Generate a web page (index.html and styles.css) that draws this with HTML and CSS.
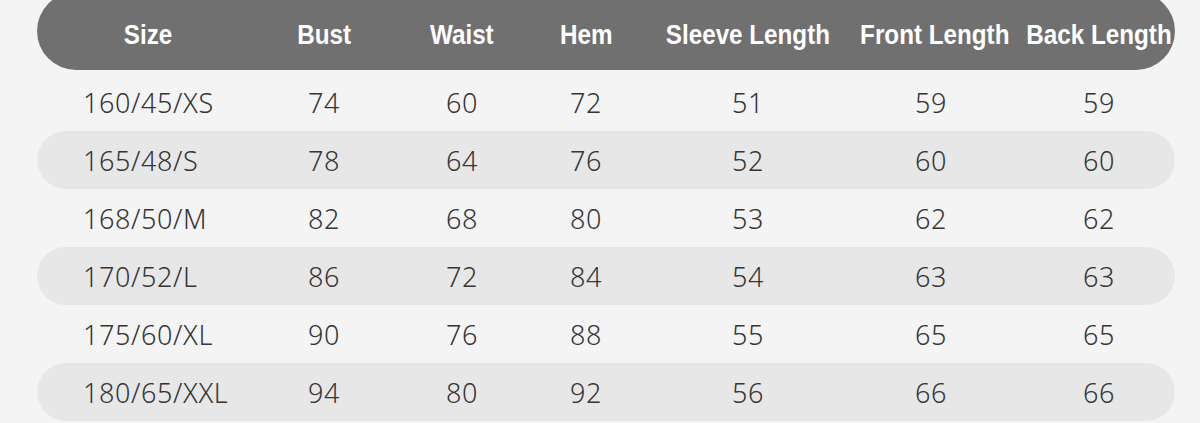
FILE: index.html
```html
<!DOCTYPE html>
<html>
<head>
<meta charset="utf-8">
<link rel="stylesheet" href="styles.css">
</head>
<body>
<div class="table">
  <div class="row head">
    <div class="c c1"><span class="t">Size</span></div>
    <div class="c c2"><span class="t">Bust</span></div>
    <div class="c c3"><span class="t">Waist</span></div>
    <div class="c c4"><span class="t">Hem</span></div>
    <div class="c c5"><span class="t">Sleeve Length</span></div>
    <div class="c c6"><span class="t">Front Length</span></div>
    <div class="c c7"><span class="t">Back Length</span></div>
  </div>
  <div class="row">
    <div class="c c1 size"><span class="t">160/45/XS</span></div>
    <div class="c c2"><span class="t">74</span></div>
    <div class="c c3"><span class="t">60</span></div>
    <div class="c c4"><span class="t">72</span></div>
    <div class="c c5"><span class="t">51</span></div>
    <div class="c c6"><span class="t">59</span></div>
    <div class="c c7"><span class="t">59</span></div>
  </div>
  <div class="row alt">
    <div class="c c1 size"><span class="t">165/48/S</span></div>
    <div class="c c2"><span class="t">78</span></div>
    <div class="c c3"><span class="t">64</span></div>
    <div class="c c4"><span class="t">76</span></div>
    <div class="c c5"><span class="t">52</span></div>
    <div class="c c6"><span class="t">60</span></div>
    <div class="c c7"><span class="t">60</span></div>
  </div>
  <div class="row">
    <div class="c c1 size"><span class="t">168/50/M</span></div>
    <div class="c c2"><span class="t">82</span></div>
    <div class="c c3"><span class="t">68</span></div>
    <div class="c c4"><span class="t">80</span></div>
    <div class="c c5"><span class="t">53</span></div>
    <div class="c c6"><span class="t">62</span></div>
    <div class="c c7"><span class="t">62</span></div>
  </div>
  <div class="row alt">
    <div class="c c1 size"><span class="t">170/52/L</span></div>
    <div class="c c2"><span class="t">86</span></div>
    <div class="c c3"><span class="t">72</span></div>
    <div class="c c4"><span class="t">84</span></div>
    <div class="c c5"><span class="t">54</span></div>
    <div class="c c6"><span class="t">63</span></div>
    <div class="c c7"><span class="t">63</span></div>
  </div>
  <div class="row">
    <div class="c c1 size"><span class="t">175/60/XL</span></div>
    <div class="c c2"><span class="t">90</span></div>
    <div class="c c3"><span class="t">76</span></div>
    <div class="c c4"><span class="t">88</span></div>
    <div class="c c5"><span class="t">55</span></div>
    <div class="c c6"><span class="t">65</span></div>
    <div class="c c7"><span class="t">65</span></div>
  </div>
  <div class="row alt">
    <div class="c c1 size"><span class="t">180/65/XXL</span></div>
    <div class="c c2"><span class="t">94</span></div>
    <div class="c c3"><span class="t">80</span></div>
    <div class="c c4"><span class="t">92</span></div>
    <div class="c c5"><span class="t">56</span></div>
    <div class="c c6"><span class="t">66</span></div>
    <div class="c c7"><span class="t">66</span></div>
  </div>
</div>
</body>
</html>
```

FILE: styles.css
```css
html, body {
  margin: 0;
  padding: 0;
  background: #f4f4f4;
  overflow: hidden;
}

.table {
  width: 1138px;
  margin-left: 37px;
  display: flex;
  flex-direction: column;
}

.row {
  display: grid;
  grid-template-columns: 222px 130px 146px 102px 222px 144px 172px;
  align-items: center;
  height: 58px;
  font-family: "Noto Sans", "Open Sans", sans-serif;
  font-size: 27px;
  font-weight: 350;
  letter-spacing: 0.6px;
  color: #353535;
}

.row.alt {
  background: #e8e7e8;
  border-radius: 29px;
}

.row.head {
  height: 78px;
  margin-top: -8px;
  margin-bottom: 3px;
  padding-top: 8px;
  box-sizing: border-box;
  background: #707070;
  border-radius: 39px;
  font-family: "Liberation Sans", Arial, sans-serif;
  font-weight: bold;
  font-size: 28px;
  letter-spacing: 0;
  color: #ffffff;
}

.c {
  display: flex;
  justify-content: center;
  white-space: nowrap;
}

.c7 {
  padding-left: 20px;
}

.t {
  display: inline-block;
}

.head .t {
  transform: scaleX(0.865);
  transform-origin: center;
}

.head .c6 .t {
  transform: scaleX(0.865) translateX(4px);
}

.size {
  justify-content: flex-start;
  padding-left: 46px;
}
```
